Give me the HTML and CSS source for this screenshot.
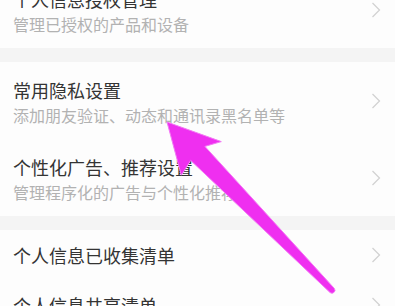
FILE: index.html
```html
<!DOCTYPE html>
<html>
  <head>
    <meta charset="UTF-8">
    <title>隐私设置</title>
    <link rel="stylesheet" href="styles.css">
  </head>
  <body>

    <div class="page">
      <div class="group">
        <div class="item item-tall">
          <div class="text">
            <div class="title">个人信息授权管理</div>
            <div class="sub">管理已授权的产品和设备</div>
          </div>
          <svg class="chevron" viewBox="0 0 10 16"><polyline points="1.5,1 8.5,8 1.5,15" /></svg>
        </div>
      </div>

      <div class="group">
        <div class="item item-tall">
          <div class="text">
            <div class="title">常用隐私设置</div>
            <div class="sub">添加朋友验证、动态和通讯录黑名单等</div>
          </div>
          <svg class="chevron" viewBox="0 0 10 16"><polyline points="1.5,1 8.5,8 1.5,15" /></svg>
        </div>
        <div class="item item-tall">
          <div class="text">
            <div class="title">个性化广告、推荐设置</div>
            <div class="sub">管理程序化的广告与个性化推荐</div>
          </div>
          <svg class="chevron" viewBox="0 0 10 16"><polyline points="1.5,1 8.5,8 1.5,15" /></svg>
        </div>
      </div>

      <div class="group">
        <div class="item">
          <div class="title">个人信息已收集清单</div>
          <svg class="chevron" viewBox="0 0 10 16"><polyline points="1.5,1 8.5,8 1.5,15" /></svg>
        </div>
        <div class="item">
          <div class="title">个人信息共享清单</div>
          <svg class="chevron" viewBox="0 0 10 16"><polyline points="1.5,1 8.5,8 1.5,15" /></svg>
        </div>
      </div>
    </div>

    <!-- pointer drawn over the screenshot -->
    <svg class="arrow" viewBox="0 0 395 306">
      <path d="M167,122 L221.3,141.6 L204.9,146.4 L334.3,288.4 A3,3 0 0 1 330.1,292.6 L190.7,160.4 L181.3,175.2 Z" />
    </svg>

  </body>
</html>
```

FILE: styles.css
```css
* {
  margin: 0;
  padding: 0;
  box-sizing: border-box;
}

body {
  background: #f4f4f4;
  font-family: "Noto Sans CJK SC", "Noto Sans", sans-serif;
  overflow: hidden;
  height: 306px;
}

.page { margin-top: -29px }

.group {
  background: #fdfdfd;
  margin-bottom: 14px;
}

.item {
  height: 50px;
  display: flex;
  align-items: center;
  justify-content: space-between;
  padding: 0 14px 0 13px;
}

.item-tall { height: 77px }

.text {
  display: flex;
  flex-direction: column;
  padding-top: 2px;
}

.title {
  font-size: 18px;
  line-height: 24px;
  color: #343434;
}

.sub {
  font-size: 16px;
  line-height: 20px;
  margin-top: 3px;
  color: #b2b2b2;
}

.chevron {
  width: 10px;
  height: 16px;
  flex: none;
}

.chevron polyline {
  fill: none;
  stroke: #d2d2d2;
  stroke-width: 1.3;
}

.arrow {
  position: absolute;
  top: 0;
  left: 0;
  width: 395px;
  height: 306px;
  pointer-events: none;
}

.arrow path {
  fill: #ef2ff0;
  stroke: #f37af4;
  stroke-width: 1;
  stroke-linejoin: round;
}
```
